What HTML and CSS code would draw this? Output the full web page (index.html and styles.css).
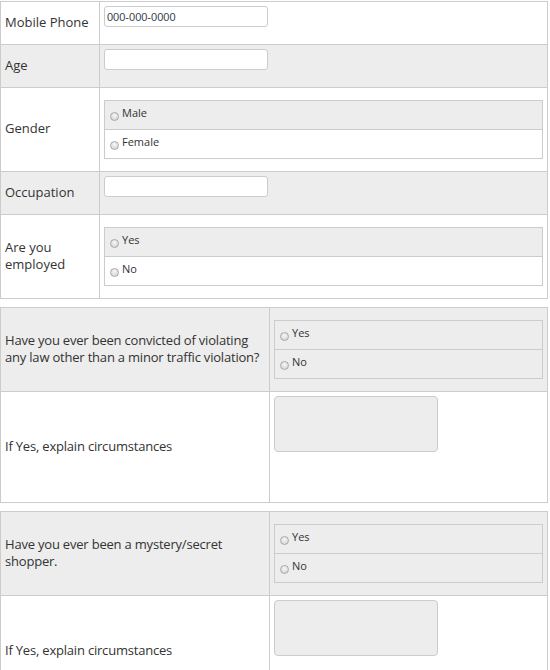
FILE: index.html
```html
<!DOCTYPE html>
<html>
<head>
<meta charset="utf-8">
<title>Application form</title>
<link rel="stylesheet" href="styles.css">
</head>
<body>
<div class="form-table narrow">
  <div class="row short">
    <div class="label">Mobile Phone</div>
    <div class="field"><input class="text" type="text" value="000-000-0000"></div>
  </div>
  <div class="row short alt">
    <div class="label">Age</div>
    <div class="field"><input class="text" type="text"></div>
  </div>
  <div class="row tall">
    <div class="label">Gender</div>
    <div class="field choice-field">
      <div class="choices">
        <label class="choice"><input type="radio" name="gender">Male</label>
        <label class="choice"><input type="radio" name="gender">Female</label>
      </div>
    </div>
  </div>
  <div class="row short alt">
    <div class="label">Occupation</div>
    <div class="field"><input class="text" type="text"></div>
  </div>
  <div class="row tall">
    <div class="label">Are you employed</div>
    <div class="field choice-field">
      <div class="choices">
        <label class="choice"><input type="radio" name="employed">Yes</label>
        <label class="choice"><input type="radio" name="employed">No</label>
      </div>
    </div>
  </div>
</div>

<div class="form-table wide">
  <div class="row tall alt">
    <div class="label">Have you ever been convicted of violating any law other than a minor traffic violation?</div>
    <div class="field choice-field">
      <div class="choices">
        <label class="choice"><input type="radio" name="convicted">Yes</label>
        <label class="choice"><input type="radio" name="convicted">No</label>
      </div>
    </div>
  </div>
  <div class="row area">
    <div class="label">If Yes, explain circumstances</div>
    <div class="field"><textarea class="box"></textarea></div>
  </div>
</div>

<div class="form-table wide">
  <div class="row tall alt">
    <div class="label">Have you ever been a mystery/secret shopper.</div>
    <div class="field choice-field">
      <div class="choices">
        <label class="choice"><input type="radio" name="shopper">Yes</label>
        <label class="choice"><input type="radio" name="shopper">No</label>
      </div>
    </div>
  </div>
  <div class="row area">
    <div class="label">If Yes, explain circumstances</div>
    <div class="field"><textarea class="box"></textarea></div>
  </div>
</div>
</body>
</html>
```

FILE: styles.css
```css
body {
  margin: 0;
  padding-top: 1px;
  background: #fff;
  font-family: "Open Sans", "DejaVu Sans", sans-serif;
  font-size: 13px;
  color: #333;
}

.form-table {
  width: 548px;
  box-sizing: border-box;
  border: 1px solid #ccc;
  border-bottom: 0;
  margin-bottom: 8px;
}

.row {
  display: grid;
  box-sizing: border-box;
  border-bottom: 1px solid #ccc;
}

.narrow .row {
  grid-template-columns: 99px 1fr;
}

.wide .row {
  grid-template-columns: 269px 1fr;
}

.row.alt {
  background: #ededed;
}

.row.short {
  height: 43px;
}

.row.tall {
  height: 84px;
}

.row.area {
  height: 111px;
}

.label {
  box-sizing: border-box;
  border-right: 1px solid #ccc;
  display: flex;
  align-items: center;
  padding: 0 4px 2px 4px;
  line-height: 17px;
}

.wide .label {
  padding-right: 0;
  letter-spacing: -0.2px;
}

.field {
  padding: 4px;
}

.choice-field {
  display: flex;
  flex-direction: column;
  justify-content: center;
  padding: 0 4px;
}

.text {
  display: block;
  box-sizing: border-box;
  width: 164px;
  height: 21px;
  margin: 0;
  padding: 0 2px;
  border: 1px solid #ccc;
  border-radius: 3px;
  background: #fff;
  font-family: "Liberation Sans", Arial, sans-serif;
  font-size: 11px;
  color: #3a3f4a;
  outline: none;
}

.box {
  display: block;
  box-sizing: border-box;
  width: 164px;
  height: 56px;
  margin: 0;
  border: 1px solid #ccc;
  border-radius: 4px;
  background: #ededed;
  resize: none;
  outline: none;
}

.choices {
  border: 1px solid #ccc;
}

.choice {
  display: flex;
  align-items: center;
  height: 28px;
  box-sizing: border-box;
  padding: 0 0 5px 5px;
  font-size: 11px;
  color: #333;
}

.choice + .choice {
  border-top: 1px solid #ccc;
  height: 29px;
}

.choice:first-child {
  background: #ededed;
}

.choice input {
  -webkit-appearance: none;
  appearance: none;
  box-sizing: border-box;
  width: 9px;
  height: 9px;
  margin: 8px 3px 0 0;
  border: 1px solid #a9a9a9;
  border-radius: 50%;
  background: radial-gradient(circle at 50% 35%, #f6f6f6, #cfcfcf);
}
```
